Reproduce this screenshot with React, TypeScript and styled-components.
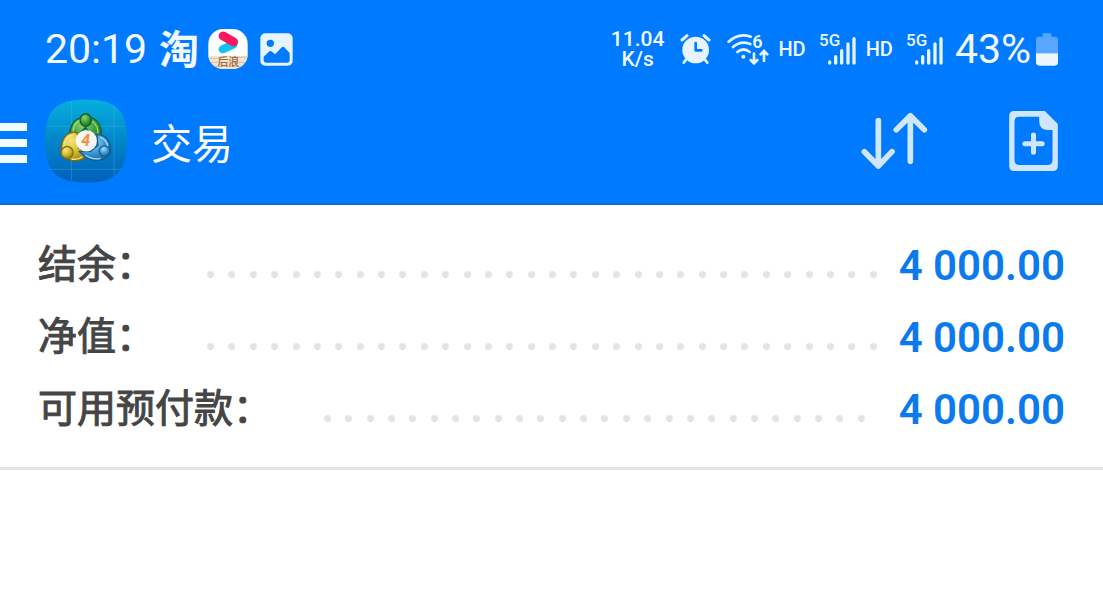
import React from "react";
import styled, { createGlobalStyle } from "styled-components";

const GlobalStyle = createGlobalStyle`
  * { box-sizing: border-box; }
  body {
    margin: 0;
    background: #ffffff;
    font-family: Roboto, "Noto Sans CJK SC", sans-serif;
  }
`;

const Screen = styled.div`
  width: 100%;
`;

const Header = styled.header`
  background: #007aff;
  border-bottom: 2px solid #0a6fd8;
  color: #f2f9ff;
`;

const StatusBar = styled.div`
  display: flex;
  align-items: center;
  justify-content: space-between;
  height: 98px;
  padding: 0 45px;
`;

const StatusGroup = styled.div<{ $gap: number }>`
  display: flex;
  align-items: center;
  gap: ${(p) => p.$gap}px;
`;

const BigText = styled.span`
  font-size: 41px;
  line-height: 48px;
`;

const TaoMark = styled.span`
  font-family: "Noto Sans CJK SC", sans-serif;
  font-size: 40px;
  font-weight: 700;
  line-height: 48px;
  margin: 0 -3px 4px 0;
`;

const Speed = styled.span`
  display: flex;
  flex-direction: column;
  align-items: center;
  font-size: 21px;
  font-weight: 500;
  line-height: 20px;
`;

const HdText = styled.span`
  margin: 0 2px 0 -2px;
  font-size: 20px;
  font-weight: 500;
  line-height: 24px;
`;

const Icon = styled.svg`
  display: block;
  flex: none;
`;

const Toolbar = styled.div`
  display: flex;
  align-items: center;
  height: 86px;
  margin-bottom: 19px;
  padding-right: 45px;
`;

const IconButton = styled.button`
  display: flex;
  align-items: center;
  padding: 0;
  border: 0;
  background: none;
  color: inherit;
  cursor: pointer;
`;

const MenuButton = styled(IconButton)`
  margin-right: 18px;
  padding-top: 4px;
`;

const Title = styled.h1`
  flex: 1;
  margin: 0 0 0 24px;
  padding-top: 8px;
  color: #ffffff;
  font-size: 41px;
  font-weight: 400;
  line-height: 60px;
`;

const Actions = styled.div`
  display: flex;
  align-items: center;
  gap: 81px;
`;

const Summary = styled.dl`
  margin: 0;
  padding: 24px 38px 22px;
  border-bottom: 3px solid #e3e3e3;
`;

const Row = styled.div`
  display: flex;
  align-items: center;
  height: 72px;
`;

const Label = styled.dt`
  flex: none;
  padding-bottom: 8px;
  color: #454545;
  font-family: "Noto Sans CJK SC", sans-serif;
  font-size: 39px;
  font-weight: 400;
  -webkit-text-stroke: 1px #454545;
  line-height: 60px;
`;

const Leader = styled.span<{ $end: number }>`
  flex: 1;
  display: flex;
  justify-content: space-between;
  margin: 18px ${(p) => p.$end}px 0 52px;
`;

const Dot = styled.i`
  width: 7px;
  height: 7px;
  border-radius: 50%;
  background: #e4e4e4;
`;

const Value = styled.dd`
  flex: none;
  margin: 0;
  padding-top: 2px;
  color: #0b7aec;
  font-size: 42px;
  font-weight: 600;
  line-height: 60px;
`;

const LIGHT = "#e6f4ff";

function VideoAppIcon() {
  return (
    <Icon width="40" height="40" viewBox="624 27 120 121" aria-hidden="true">
      <defs>
        <clipPath id="videoClip">
          <rect x="624" y="27" width="120" height="121" rx="46" />
        </clipPath>
      </defs>
      <g clipPath="url(#videoClip)">
        <rect x="624" y="27" width="120" height="121" fill="#ffffff" />
        <rect x="624" y="108" width="120" height="40" fill="#eee3d6" />
        <path d="M624 116h34M690 112h54M624 128h120M640 140h90" stroke="#dcc2a2" strokeWidth="3" />
        <path d="M668 88L700 74" stroke="#10c3ee" strokeWidth="25" strokeLinecap="round" />
        <path d="M669 48L701 66" stroke="#f9195f" strokeWidth="27" strokeLinecap="round" />
        <text x="685" y="140" textAnchor="middle" fontSize="33" fontWeight="500" fill="#a06a36" fontFamily="Noto Sans CJK SC, sans-serif">后浪</text>
      </g>
    </Icon>
  );
}

function PictureIcon() {
  return (
    <Icon width="33" height="33" viewBox="778 39 99 99" aria-hidden="true">
      <rect x="779" y="40" width="97" height="97" rx="15" fill={LIGHT} />
      <circle cx="809" cy="70" r="11" fill="#007aff" />
      <path d="M789 110L806 94Q810 91 814 95L823 103L842 83Q847 78 852 83L867 99V120Q867 128 859 128H797Q789 128 789 120Z" fill="#007aff" />
    </Icon>
  );
}

function AlarmIcon() {
  return (
    <Icon width="31" height="32" viewBox="241 38 93 96" aria-hidden="true">
      <g stroke={LIGHT} strokeLinecap="round" fill="none">
        <path d="M247 59L262 46M328 59L313 46" strokeWidth="9" />
        <path d="M260 117L252 127M315 117L323 127" strokeWidth="8" />
      </g>
      <circle cx="288" cy="89" r="40" fill={LIGHT} />
      <path d="M288 68V90H305" fill="none" stroke="#007aff" strokeWidth="8" strokeLinecap="round" strokeLinejoin="round" />
    </Icon>
  );
}

function WifiIcon() {
  return (
    <Icon width="42" height="42" viewBox="379 24 126 126" aria-hidden="true">
      <g fill="none" stroke={LIGHT} strokeWidth="8" strokeLinecap="round">
        <path d="M384 65Q414 37 450 50" />
        <path d="M397 81Q421 60 449 72" />
        <path d="M410 96Q429 81 447 96" />
        <path d="M460 101V129M450 120L460 130L470 120" />
        <path d="M490 123V94M480 103L490 93L500 103" />
      </g>
      <circle cx="428" cy="110" r="6" fill={LIGHT} />
      <text x="455" y="83" fontSize="54" fontWeight="600" fill={LIGHT} fontFamily="Roboto, sans-serif">6</text>
    </Icon>
  );
}

function SignalIcon() {
  return (
    <Icon width="38" height="42" viewBox="53 24 114 126" aria-label="5G" role="img">
      <text x="53" y="78" fontSize="51" fontWeight="500" fill={LIGHT} fontFamily="Roboto, sans-serif">5G</text>
      <g stroke={LIGHT} strokeWidth="10" strokeLinecap="round">
        <path d="M85 126V129M103 110V129M121 92V129M140 72V129M158 56V129" />
      </g>
    </Icon>
  );
}

function BatteryIcon() {
  return (
    <Icon width="22" height="33" viewBox="708 37 66 99" aria-hidden="true">
      <path d="M728 38H754V48H764Q774 48 774 58V98H708V58Q708 48 718 48H728Z" fill="#58a6ff" />
      <path d="M708 98H774V125Q774 135 764 135H718Q708 135 708 125Z" fill="#edf6ff" />
    </Icon>
  );
}

function MenuIcon() {
  return (
    <Icon width="27" height="40" viewBox="0 0 27 40" aria-hidden="true">
      <path d="M0 0H27V8H0ZM0 16H27V24H0ZM0 32H27V40H0Z" fill="#f0faff" />
    </Icon>
  );
}

function TraderLogo() {
  return (
    <Icon width="82" height="84" viewBox="134 27 248 251" role="img" aria-label="MetaTrader 4">
      <defs>
        <linearGradient id="tile" x1="0" y1="0" x2="0" y2="1">
          <stop offset="0" stopColor="#06afdf" />
          <stop offset="0.45" stopColor="#028acb" />
          <stop offset="1" stopColor="#0060b9" />
        </linearGradient>
        <radialGradient id="green" cx="0.4" cy="0.3" r="0.8">
          <stop offset="0" stopColor="#8fd36c" />
          <stop offset="0.6" stopColor="#30963a" />
          <stop offset="1" stopColor="#12672a" />
        </radialGradient>
        <radialGradient id="yellow" cx="0.35" cy="0.3" r="0.8">
          <stop offset="0" stopColor="#f6e684" />
          <stop offset="0.5" stopColor="#d8bd30" />
          <stop offset="1" stopColor="#8f7a10" />
        </radialGradient>
        <radialGradient id="blue" cx="0.4" cy="0.3" r="0.8">
          <stop offset="0" stopColor="#a6dbf7" />
          <stop offset="0.5" stopColor="#3e9bd6" />
          <stop offset="1" stopColor="#105f9e" />
        </radialGradient>
      </defs>
      <path d="M258 27C350 27 382 60 382 152C382 244 350 278 258 278C166 278 134 244 134 152C134 60 166 27 258 27Z" fill="url(#tile)" />
      <path d="M214 33V272M343 45V260M141 108H376M146 238H370" stroke="#5fc3ea" strokeOpacity="0.45" strokeWidth="2" />
      <g strokeLinejoin="round" strokeWidth="4">
        <path d="M211 142C205 110 222 86 245 82H272C297 89 309 112 303 147L286 158L257 111L230 139Z" fill="url(#green)" stroke="#17612f" />
        <path d="M219 127Q219 96 243 89M275 92Q296 105 294 132" fill="none" stroke="#a5da7c" strokeWidth="4" />
        <path d="M226 125C196 126 182 146 183 188C190 210 225 219 251 207L267 188L235 174L244 142Z" fill="url(#yellow)" stroke="#776713" />
        <path d="M191 171Q192 139 220 134M214 207Q232 211 247 200" fill="none" stroke="#f7e88d" strokeWidth="4" />
        <path d="M291 132C319 134 334 154 332 189C315 217 272 222 237 184H271L294 166Z" fill="url(#blue)" stroke="#165b91" />
        <path d="M300 141Q320 148 324 168M256 195Q278 211 302 205" fill="none" stroke="#a6dbf7" strokeWidth="4" />
        <ellipse cx="257" cy="89" rx="17" ry="19" fill="url(#green)" stroke="#155b2b" />
        <circle cx="201" cy="187" r="18" fill="url(#yellow)" stroke="#827017" />
        <circle cx="314" cy="183" r="16" fill="url(#blue)" stroke="#165b91" />
      </g>
      <circle cx="259" cy="152" r="32" fill="#f8f6f2" />
      <text x="257" y="169" textAnchor="middle" fontSize="48" fontWeight="700" fontStyle="italic" fill="#ef9140" fontFamily="Roboto, sans-serif">4</text>
    </Icon>
  );
}

function SortIcon() {
  return (
    <Icon width="67" height="58" viewBox="32 50 201 174" aria-hidden="true">
      <path d="M84 76V212M42 169L84 212L125 169M180 198V62M138 103L180 61L222 103" fill="none" stroke="#cfe6ff" strokeWidth="17" strokeLinecap="round" strokeLinejoin="round" />
    </Icon>
  );
}

function NewOrderIcon() {
  return (
    <Icon width="49" height="60" viewBox="477 48 146 180" aria-hidden="true">
      <path fillRule="evenodd" d="M492 48H584L623 87V213Q623 228 608 228H492Q477 228 477 213V63Q477 48 492 48ZM508 65Q493 65 493 80V195Q493 210 508 210H592Q607 210 607 195V105H594Q567 105 567 78V65Z" fill="#cfe6ff" />
      <path d="M550 120V172M524 146H576" stroke="#cfe6ff" strokeWidth="15" strokeLinecap="round" />
    </Icon>
  );
}

const rows = [
  { label: "结余：", value: "4 000.00", dots: 32, end: 22 },
  { label: "净值：", value: "4 000.00", dots: 32, end: 22 },
  { label: "可用预付款：", value: "4 000.00", dots: 26, end: 34 },
];

export default function App() {
  return (
    <Screen>
      <GlobalStyle />
      <Header>
        <StatusBar>
          <StatusGroup $gap={12}>
            <BigText>20:19</BigText>
            <TaoMark>淘</TaoMark>
            <VideoAppIcon />
            <PictureIcon />
          </StatusGroup>
          <StatusGroup $gap={11}>
            <StatusGroup $gap={16}>
              <Speed>
                <span>11.04</span>
                <span>K/s</span>
              </Speed>
              <AlarmIcon />
              <WifiIcon />
            </StatusGroup>
            <HdText>HD</HdText>
            <SignalIcon />
            <HdText>HD</HdText>
            <SignalIcon />
            <StatusGroup $gap={5}>
              <BigText>43%</BigText>
              <BatteryIcon />
            </StatusGroup>
          </StatusGroup>
        </StatusBar>
        <Toolbar>
          <MenuButton type="button" aria-label="菜单">
            <MenuIcon />
          </MenuButton>
          <TraderLogo />
          <Title>交易</Title>
          <Actions>
            <IconButton type="button" aria-label="排序">
              <SortIcon />
            </IconButton>
            <IconButton type="button" aria-label="新订单">
              <NewOrderIcon />
            </IconButton>
          </Actions>
        </Toolbar>
      </Header>
      <main>
        <Summary>
          {rows.map((row) => (
            <Row key={row.label}>
              <Label>{row.label}</Label>
              <Leader $end={row.end} aria-hidden="true">
                {Array.from({ length: row.dots }, (_, i) => (
                  <Dot key={i} />
                ))}
              </Leader>
              <Value>{row.value}</Value>
            </Row>
          ))}
        </Summary>
      </main>
    </Screen>
  );
}
